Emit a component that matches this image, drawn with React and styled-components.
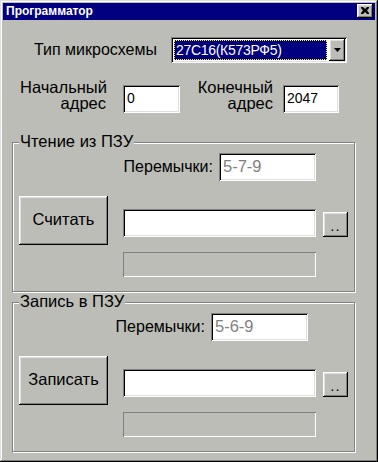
import styled, { createGlobalStyle } from "styled-components";

const GlobalStyle = createGlobalStyle`
  html, body {
    margin: 0;
    padding: 0;
    background: #bcbdb6;
  }
  * {
    box-sizing: border-box;
  }
`;

const face = "#bcbdb6";

const raised = `
  box-shadow: inset -1px -1px 0 #000, inset 1px 1px 0 #fff,
    inset -2px -2px 0 #808080, inset 2px 2px 0 #dfdfdf;
`;

const sunken = `
  box-shadow: inset 1px 1px 0 #808080, inset -1px -1px 0 #fff,
    inset 2px 2px 0 #000, inset -2px -2px 0 #dfdfdf;
`;

const Window = styled.div`
  width: 378px;
  height: 462px;
  padding: 3px;
  background: ${face};
  font-family: "Liberation Sans", Arial, sans-serif;
  font-size: 16px;
  color: #000;
  box-shadow: inset -1px -1px 0 #000, inset 1px 1px 0 #dfdfdf,
    inset -2px -2px 0 #808080, inset 2px 2px 0 #fff;
`;

const TitleBar = styled.div`
  height: 17px;
  background: #000080;
  display: flex;
  align-items: flex-start;
  justify-content: space-between;
  padding: 0 2px 0 3px;
`;

const Title = styled.span`
  color: #fff;
  font-weight: bold;
  font-size: 12px;
  line-height: 17px;
`;

const CloseButton = styled.div`
  width: 16px;
  height: 14px;
  margin-top: 1px;
  background: ${face};
  ${raised}
  display: flex;
  align-items: center;
  justify-content: center;
  padding-bottom: 1px;
`;

const ChipRow = styled.div`
  display: flex;
  align-items: center;
  justify-content: flex-end;
  gap: 14px;
  margin-top: 17px;
  padding-right: 28px;
`;

const Label = styled.span`
  font-size: 16px;
  line-height: 16px;
  white-space: nowrap;
`;

const Combo = styled.div`
  width: 176px;
  height: 26px;
  background: #fff;
  ${sunken}
  display: flex;
  padding: 2px;
`;

const Selection = styled.div`
  flex: 1;
  margin: 1px 2px 1px 1px;
  background: #000080;
  border: 1px dotted #ffff00;
  color: #fff;
  font-size: 14px;
  letter-spacing: -0.3px;
  line-height: 18px;
  padding-left: 1px;
  white-space: nowrap;
  overflow: hidden;
`;

const ArrowButton = styled.div`
  width: 16px;
  background: ${face};
  ${raised}
  display: flex;
  align-items: center;
  justify-content: center;
`;

const AddrRow = styled.div`
  display: flex;
  align-items: flex-start;
  margin-top: 16px;
  padding-left: 17px;
`;

const AddrLabel = styled.div`
  width: ${p => p.$width}px;
  margin-left: ${p => p.$offset || 0}px;
  text-align: right;
  font-size: 16.5px;
  line-height: 16px;
`;

const Field = styled.div`
  width: ${p => p.$width}px;
  height: 28px;
  margin-left: ${p => p.$offset || 0}px;
  margin-top: ${p => p.$top || 0}px;
  background: #fff;
  ${sunken}
  color: ${p => (p.$dim ? "#808080" : "#000")};
  font-size: ${p => p.$size || 14}px;
  line-height: 27px;
  padding-left: 4px;
  white-space: nowrap;
`;

const Group = styled.fieldset`
  width: 343px;
  margin: ${p => p.$top}px 0 0 9px;
  padding: 0;
  border: 1px solid #808080;
  box-shadow: inset 1px 1px 0 #fff, 1px 1px 0 #fff;
  min-width: 0;
`;

const Legend = styled.legend`
  margin-left: 6px;
  padding: 0 1px 2px;
  background: ${face};
  font-size: 16.5px;
  line-height: 15px;
`;

const GroupBody = styled.div`
  padding: 2px 0 14px 6px;
`;

const JumperRow = styled.div`
  display: flex;
  align-items: center;
  padding-left: ${p => p.$inset}px;
`;

const JumperLabel = styled.span`
  width: 95px;
  text-align: right;
  margin-right: 6px;
  padding-bottom: 1px;
  font-size: 16px;
  white-space: nowrap;
`;

const ActionRow = styled.div`
  display: flex;
  align-items: flex-start;
  margin-top: 15px;
`;

const ActionButton = styled.div`
  width: 89px;
  height: 49px;
  background: ${face};
  ${raised}
  display: flex;
  align-items: center;
  justify-content: center;
  font-size: 16.5px;
  padding-bottom: 2px;
`;

const FileColumn = styled.div`
  display: flex;
  flex-direction: column;
  margin-left: 15px;
`;

const FileRow = styled.div`
  display: flex;
  align-items: flex-end;
  margin-top: 13px;
`;

const BrowseButton = styled.div`
  width: 25px;
  height: 25px;
  margin-left: 7px;
  background: ${face};
  ${raised}
  display: flex;
  align-items: flex-end;
  justify-content: center;
  font-size: 15px;
  line-height: 15px;
  padding-bottom: 4px;
  letter-spacing: 1px;
`;

const Progress = styled.div`
  width: 193px;
  height: 25px;
  margin-top: 15px;
  box-shadow: inset 1px 1px 0 #808080, inset -1px -1px 0 #fff;
`;

function CloseIcon() {
  return (
    <svg width="8" height="7" viewBox="0 0 8 7">
      <path d="M0 0h2l2 2 2-2h2v1L6 3.5 8 6v1H6L4 5 2 7H0V6l2-2.5L0 1z" fill="#000" />
    </svg>
  );
}

function ArrowIcon() {
  return (
    <svg width="7" height="4" viewBox="0 0 7 4">
      <path d="M0 0h7L3.5 4z" fill="#000" />
    </svg>
  );
}

function RomGroup({ title, jumpers, inset, action, top }) {
  return (
    <Group $top={top}>
      <Legend>{title}</Legend>
      <GroupBody>
        <JumperRow $inset={inset}>
          <JumperLabel>Перемычки:</JumperLabel>
          <Field $width={97} $size={16.5} $dim>{jumpers}</Field>
        </JumperRow>
        <ActionRow>
          <ActionButton>{action}</ActionButton>
          <FileColumn>
            <FileRow>
              <Field $width={193} />
              <BrowseButton>..</BrowseButton>
            </FileRow>
            <Progress />
          </FileColumn>
        </ActionRow>
      </GroupBody>
    </Group>
  );
}

export default function App() {
  return (
    <>
      <GlobalStyle />
      <Window>
        <TitleBar>
          <Title>Программатор</Title>
          <CloseButton>
            <CloseIcon />
          </CloseButton>
        </TitleBar>
        <ChipRow>
          <Label>Тип микросхемы</Label>
          <Combo>
            <Selection>27C16(К573РФ5)</Selection>
            <ArrowButton>
              <ArrowIcon />
            </ArrowButton>
          </Combo>
        </ChipRow>
        <AddrRow>
          <AddrLabel $width={86}>Начальный<br />адрес</AddrLabel>
          <Field $width={57} $offset={17} $top={6}>0</Field>
          <AddrLabel $width={78} $offset={15}>Конечный<br />адрес</AddrLabel>
          <Field $width={56} $offset={10} $top={6}>2047</Field>
        </AddrRow>
        <RomGroup title="Чтение из ПЗУ" jumpers="5-7-9" inset={99} action="Считать" top={21} />
        <RomGroup title="Запись в ПЗУ" jumpers="5-6-9" inset={91} action="Записать" top={2} />
      </Window>
    </>
  );
}
